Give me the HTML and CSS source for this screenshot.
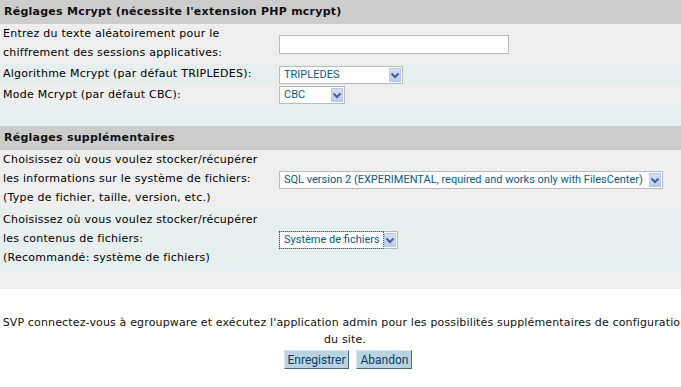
FILE: index.html
```html
<!DOCTYPE html>
<html lang="fr">
<head>
<meta charset="utf-8">
<title>Configuration</title>
<link rel="stylesheet" href="styles.css">
</head>
<body>
<form class="page">
  <table class="config">
    <tr class="head"><td colspan="2">Réglages Mcrypt (nécessite l'extension PHP mcrypt)</td></tr>
    <tr class="on h40">
      <td class="label">Entrez du texte aléatoirement pour le<br>chiffrement des sessions applicatives:</td>
      <td><input class="text" type="text"></td>
    </tr>
    <tr class="off h21">
      <td class="label">Algorithme Mcrypt (par défaut TRIPLEDES):</td>
      <td><span class="sel w124"><select><option>TRIPLEDES</option></select><span class="arrow"><svg width="10" height="12" viewBox="0 0 10 12"><polyline points="1.5,4.5 5,8 8.5,4.5" fill="none" stroke="#4b5f86" stroke-width="2"/></svg></span></span></td>
    </tr>
    <tr class="on h20">
      <td class="label">Mode Mcrypt (par défaut CBC):</td>
      <td><span class="sel w66"><select><option>CBC</option></select><span class="arrow"><svg width="10" height="12" viewBox="0 0 10 12"><polyline points="1.5,4.5 5,8 8.5,4.5" fill="none" stroke="#4b5f86" stroke-width="2"/></svg></span></span></td>
    </tr>
    <tr class="off h21"><td colspan="2"></td></tr>
    <tr class="head"><td colspan="2">Réglages supplémentaires</td></tr>
    <tr class="on h59">
      <td class="label">Choisissez où vous voulez stocker/récupérer<br>les informations sur le système de fichiers:<br>(Type de fichier, taille, version, etc.)</td>
      <td><span class="sel w384"><select><option>SQL version 2 (EXPERIMENTAL, required and works only with FilesCenter)</option></select><span class="arrow"><svg width="10" height="12" viewBox="0 0 10 12"><polyline points="1.5,4.5 5,8 8.5,4.5" fill="none" stroke="#4b5f86" stroke-width="2"/></svg></span></span></td>
    </tr>
    <tr class="off h61">
      <td class="label">Choisissez où vous voulez stocker/récupérer<br>les contenus de fichiers:<br>(Recommandé: système de fichiers)</td>
      <td><span class="sel w119"><select><option>Système de fichiers</option></select><span class="ring"></span><span class="arrow"><svg width="10" height="12" viewBox="0 0 10 12"><polyline points="1.5,4.5 5,8 8.5,4.5" fill="none" stroke="#4b5f86" stroke-width="2"/></svg></span></span></td>
    </tr>
    <tr class="on h19"><td colspan="2"></td></tr>
  </table>
  <div class="footer">
    <p class="note">SVP connectez-vous à egroupware et exécutez l'application admin pour les possibilités supplémentaires de configuration<br>du site.</p>
    <div class="buttons">
      <button type="button" class="btn">Enregistrer</button>
      <button type="button" class="btn">Abandon</button>
    </div>
  </div>
</form>
</body>
</html>
```
FILE: styles.css
```css
html, body {
  margin: 0;
  padding: 0;
  background: #ffffff;
  overflow: hidden;
}
body {
  font-family: "DejaVu Sans", Verdana, sans-serif;
  font-size: 11px;
  color: #000;
}
.page {
  margin: 0;
}
.config {
  width: 681px;
  border-collapse: collapse;
  border-spacing: 0;
}
.config td {
  padding: 0 0 0 3px;
  vertical-align: middle;
  line-height: 18.7px;
}
.config td.label {
  width: 276px;
  white-space: nowrap;
  letter-spacing: 0.25px;
}
.config td + td {
  padding-left: 0;
}
.head td {
  height: 24px;
  background: #cccccc;
  font-weight: bold;
  padding-left: 4px;
  color: #111;
  letter-spacing: 0.25px;
}
.on td { background: #eeeeee; }
.off td { background: #e6eeee; }
.h40 td { height: 40px; }
.h21 td { height: 21px; }
.h20 td { height: 20px; }
.h59 td { height: 59px; }
.h61 td { height: 61px; }
.h19 td { height: 19px; }

.text {
  display: block;
  box-sizing: border-box;
  width: 230px;
  height: 19px;
  margin: 0;
  border: 1px solid #bbbbbb;
  background: #fff;
  padding: 0 3px;
}

.sel {
  position: relative;
  display: block;
  height: 18px;
}
.sel select {
  appearance: none;
  -webkit-appearance: none;
  box-sizing: border-box;
  width: 100%;
  height: 18px;
  margin: 0;
  border: 1px solid #bbbbbb;
  background: #fff;
  padding: 0 0 0 4px;
  font-family: Roboto, "Liberation Sans", sans-serif;
  font-size: 11px;
  color: #0b5a88;
  line-height: 16px;
  outline: none;
}
.w124 { width: 124px; }
.w66 { width: 66px; }
.w384 { width: 384px; }
.w119 { width: 119px; }

.arrow {
  position: absolute;
  top: 2px;
  right: 2px;
  width: 12px;
  height: 14px;
  box-sizing: border-box;
  border: 1px solid #b6c7f1;
  background: linear-gradient(#d4dffa, #bacbf4);
  display: flex;
  align-items: center;
  justify-content: center;
  pointer-events: none;
}
.ring {
  position: absolute;
  left: 0;
  top: 0;
  bottom: 0;
  right: 14px;
  border: 1px dotted #1f5684;
  pointer-events: none;
}

.footer {
  width: 690px;
  text-align: center;
  padding-top: 25px;
}
.note {
  margin: 0;
  line-height: 17px;
  letter-spacing: 0.15px;
  white-space: nowrap;
  color: #111;
}
.buttons {
  display: flex;
  justify-content: center;
  gap: 7px;
  margin-top: 2px;
  padding-left: 6px;
}
.btn {
  height: 19px;
  box-sizing: border-box;
  padding: 0 3px;
  margin: 0;
  font-family: Roboto, "Liberation Sans", sans-serif;
  font-size: 12px;
  line-height: 16px;
  color: #0d3e66;
  background: #b9d4e1;
  border: 1px solid;
  border-color: #d9e8f0 #4a6a7e #4a6a7e #d9e8f0;
}
```
